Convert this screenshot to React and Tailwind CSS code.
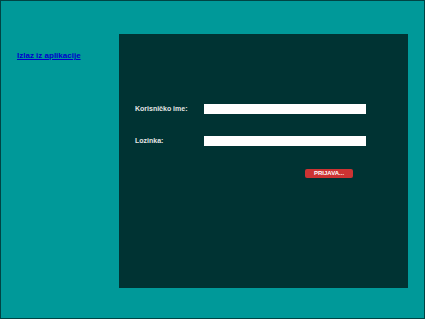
import { useState } from 'react';

const App = () => {
  const [username, setUsername] = useState('');
  const [password, setPassword] = useState('');

  return (
    <div className="w-[425px] h-[319px] border border-[#004444] bg-[#009999] flex font-['Liberation_Sans',Arial,sans-serif]">
      <div className="w-[118px] pt-[50px] pl-[16px]">
        <a href="#" className="block text-[8px] font-bold text-[#0000cc] underline leading-[10px]">
          Izlaz iz aplikacije
        </a>
      </div>
      <div className="mt-[33px] w-[289px] h-[254px] bg-[#003333] flex flex-col pt-[70px] pl-[16px]">
        <div className="flex items-center h-[10px]">
          <label className="w-[69px] text-[7px] font-bold text-[#e6e6e6]">Korisničko ime:</label>
          <input
            type="text"
            value={username}
            onChange={e => setUsername(e.target.value)}
            className="w-[162px] h-[10px] bg-white border-0 outline-none"
          />
        </div>
        <div className="flex items-center h-[10px] mt-[22px]">
          <label className="w-[69px] text-[7px] font-bold text-[#e6e6e6]">Lozinka:</label>
          <input
            type="password"
            value={password}
            onChange={e => setPassword(e.target.value)}
            className="w-[162px] h-[10px] bg-white border-0 outline-none"
          />
        </div>
        <div className="flex pl-[170px] mt-[23px]">
          <button className="w-[48px] h-[9px] rounded-[2px] bg-[#cc3333] text-white text-[6px] font-bold leading-[9px]">
            PRIJAVA...
          </button>
        </div>
      </div>
    </div>
  );
};

export default App;
